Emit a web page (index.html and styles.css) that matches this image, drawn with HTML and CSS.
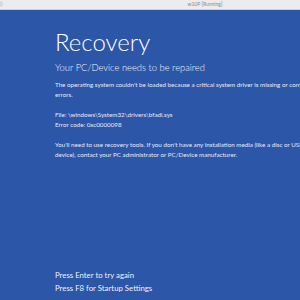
FILE: index.html
```html
<!DOCTYPE html>
<html>
<head>
<meta charset="utf-8">
<link rel="stylesheet" href="styles.css">
</head>
<body>
<div class="window">
  <div class="titlebar">
    <span class="dot"></span>
    <span class="title">w10P [Running]</span>
  </div>
  <div class="screen">
    <h1 class="heading">Recovery</h1>
    <h2 class="sub">Your PC/Device needs to be repaired</h2>
    <p class="para">The operating system couldn't be loaded because a critical system driver is missing or contains<br>errors.</p>
    <p class="para">File: \windows\System32\drivers\bfadi.sys<br>Error code: 0xc0000098</p>
    <p class="para">You'll need to use recovery tools. If you don't have any installation media (like a disc or USB<br>device), contact your PC administrator or PC/Device manufacturer.</p>
    <div class="spacer"></div>
    <p class="keys">Press Enter to try again<br>Press F8 for Startup Settings</p>
  </div>
</div>
</body>
</html>
```

FILE: styles.css
```css
html, body {
  margin: 0;
  padding: 0;
  width: 300px;
  height: 300px;
  overflow: hidden;
}
.window {
  display: flex;
  flex-direction: column;
  height: 300px;
  font-family: "Lato", "Open Sans", sans-serif;
}
.titlebar {
  height: 9px;
  background: #ececec;
  border-bottom: 1px solid #d0d0d0;
  position: relative;
  display: flex;
  justify-content: center;
  align-items: center;
  flex-shrink: 0;
}
.dot {
  position: absolute;
  left: -3px;
  top: 1px;
  width: 6px;
  height: 6px;
  border-radius: 50%;
  background: #d8d8d8;
}
.title {
  font-size: 5px;
  color: #8a8a8a;
  margin-left: 110px;
  line-height: 9px;
}
.screen {
  flex: 1;
  background: #2c56a8;
  color: #ffffff;
  padding: 18px 0 5px 55px;
  display: flex;
  flex-direction: column;
  white-space: nowrap;
  overflow: hidden;
}
.heading {
  margin: 0;
  font-size: 24px;
  font-weight: 300;
  line-height: 27px;
}
.sub {
  margin: 6px 0 0 0;
  font-size: 9.4px;
  font-weight: 300;
  line-height: 13px;
  color: #f2f4fa;
}
.para {
  margin: 10px 0 0 0;
  font-size: 6.25px;
  line-height: 10px;
  color: #e6ebf5;
}
.para:first-of-type {
  margin-top: 6px;
}
.spacer {
  flex: 1;
}
.keys {
  margin: 0;
  font-size: 7.8px;
  line-height: 13px;
  color: #eef1f8;
}
```
